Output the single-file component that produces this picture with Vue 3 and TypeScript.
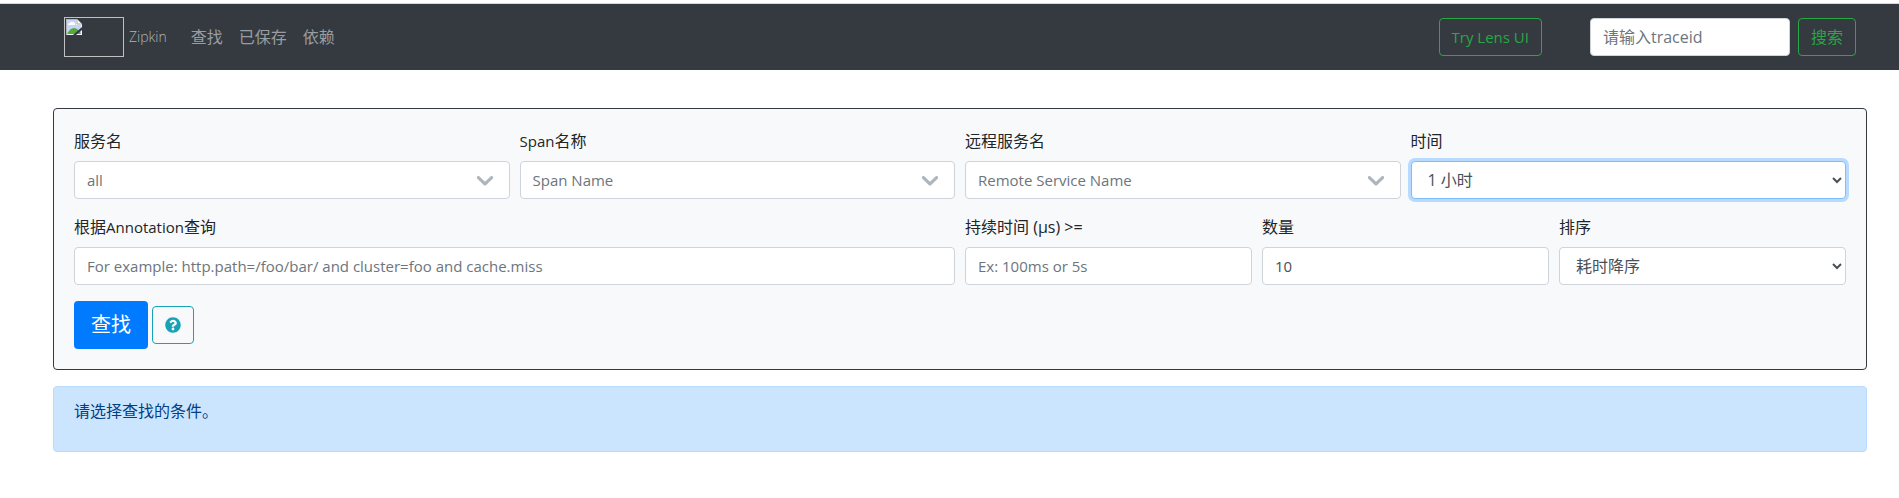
<script setup lang="ts">
import { ref } from 'vue'

interface PickerField {
  id: string
  latin: string
  label: string
  shown: string
}

const navLinks: string[] = ['查找', '已保存', '依赖']

const pickers: PickerField[] = [
  { id: 'service', latin: '', label: '服务名', shown: 'all' },
  { id: 'span', latin: 'Span', label: '名称', shown: 'Span Name' },
  { id: 'remote', latin: '', label: '远程服务名', shown: 'Remote Service Name' },
]

const traceId = ref('')
const annotation = ref('')
const duration = ref('')
const limit = ref('10')
</script>

<template>
  <div class="page">
    <nav class="navbar">
      <a class="brand" href="#">
        <svg class="logo" viewBox="0 0 60 40" aria-hidden="true">
          <rect x="0.5" y="0.5" width="59" height="39" fill="none" stroke="#c0c0c0" />
          <path d="M2 2H13L18 7V18H2Z" fill="#f4f6f8" />
          <path d="M3 3H12V8H17V17H3Z" fill="#c3d5f8" />
          <path d="M4 8Q4 6 6 6Q7 4 9 5Q11 5 11 8Z" fill="#fff" />
          <path d="M3 17Q6 11 10 11Q14 11 17 17Z" fill="#55ab3a" />
          <path d="M13 2L18 7H13Z" fill="#f8f9fa" stroke="#8b929b" stroke-width="0.7" />
          <path d="M18 10L9 18H12L18 13Z" fill="#343a40" />
          <path d="M2.5 18V2.5H13" fill="none" stroke="#9da3aa" stroke-width="0.8" />
        </svg>
        <span>Zipkin</span>
      </a>
      <div class="links">
        <a v-for="link in navLinks" :key="link" href="#">{{ link }}</a>
      </div>
      <button class="btn outline-green lens" type="button">Try Lens UI</button>
      <form class="trace-form" @submit.prevent>
        <input v-model="traceId" class="control" type="text" placeholder="请输入traceid" aria-label="请输入traceid" />
        <button class="btn outline-green" type="submit">搜索</button>
      </form>
    </nav>

    <main class="content">
      <form class="card" @submit.prevent>
        <div class="fields">
          <div v-for="p in pickers" :key="p.id" class="field quarter">
            <label :for="p.id"><span class="latin">{{ p.latin }}</span>{{ p.label }}</label>
            <div class="picker">
              <select :id="p.id" class="control latin">
                <option>{{ p.shown }}</option>
              </select>
              <svg class="chevron" viewBox="0 0 20 20" aria-hidden="true">
                <path d="M4.516 7.548c0.436-0.446 1.043-0.481 1.576 0l3.908 3.747 3.908-3.747c0.533-0.481 1.141-0.446 1.574 0 0.436 0.445 0.408 1.197 0 1.615-0.406 0.418-4.695 4.502-4.695 4.502-0.217 0.223-0.502 0.335-0.787 0.335s-0.57-0.112-0.789-0.335c0 0-4.287-4.084-4.695-4.502s-0.436-1.17 0-1.615z" />
              </svg>
            </div>
          </div>
          <div class="field quarter">
            <label for="lookback">时间</label>
            <select id="lookback" class="control active">
              <option>1 小时</option>
            </select>
          </div>
          <div class="field half">
            <label for="annotation">根据<span class="latin">Annotation</span>查询</label>
            <input id="annotation" v-model="annotation" class="control latin" type="text" placeholder="For example: http.path=/foo/bar/ and cluster=foo and cache.miss" />
          </div>
          <div class="field sixth">
            <label for="duration">持续时间 (μs) &gt;=</label>
            <input id="duration" v-model="duration" class="control latin" type="text" placeholder="Ex: 100ms or 5s" />
          </div>
          <div class="field sixth">
            <label for="limit">数量</label>
            <input id="limit" v-model="limit" class="control latin" type="text" />
          </div>
          <div class="field sixth">
            <label for="sort">排序</label>
            <select id="sort" class="control">
              <option>耗时降序</option>
            </select>
          </div>
        </div>
        <div class="actions">
          <button class="btn primary" type="submit">查找</button>
          <button class="btn help" type="button" aria-label="帮助">
            <svg viewBox="0 0 512 512" aria-hidden="true">
              <path d="M504 256c0 136.997-111.043 248-248 248S8 392.997 8 256C8 119.083 119.043 8 256 8s248 111.083 248 248zM262.655 90c-54.497 0-89.255 22.957-116.549 63.758-3.536 5.286-2.353 12.415 2.715 16.258l34.699 26.31c5.205 3.947 12.621 3.008 16.665-2.122 17.864-22.658 30.113-35.797 57.303-35.797 20.429 0 45.698 13.148 45.698 32.958 0 14.976-12.363 22.667-32.534 33.976C247.128 238.528 216 254.941 216 296v4c0 6.627 5.373 12 12 12h56c6.627 0 12-5.373 12-12v-1.333c0-28.462 83.186-29.647 83.186-106.667 0-58.002-60.165-102-116.531-102zM256 338c-25.365 0-46 20.635-46 46 0 25.364 20.635 46 46 46s46-20.636 46-46c0-25.365-20.635-46-46-46z" />
            </svg>
          </button>
        </div>
      </form>

      <div class="notice" role="status">
        <p>请选择查找的条件。</p>
      </div>
    </main>
  </div>
</template>

<style>
body {
  margin: 0;
  background: #fff;
}
</style>

<style scoped>
.page {
  padding-top: 3px;
  color: #212529;
  font: 16px/24px "Open Sans", "Noto Sans CJK SC", sans-serif;
}

.page *,
.page *::before {
  box-sizing: border-box;
}

.navbar {
  display: flex;
  align-items: center;
  height: 67px;
  padding: 0 43px 0 64px;
  border-top: 1px solid #d5d7d9;
  background: #343a40;
}

.navbar a {
  color: #9a9da0;
  text-decoration: none;
}

.navbar .brand {
  display: flex;
  align-items: center;
  gap: 5px;
  color: #b0b3b6;
  font-size: 14px;
  font-weight: 300;
}

.logo {
  width: 60px;
  height: 40px;
}

.links {
  display: flex;
  gap: 16px;
  margin-left: 24px;
}

.trace-form {
  display: flex;
  gap: 8px;
  margin-left: 48px;
}

.trace-form .control {
  width: 200px;
}

.btn {
  height: 38px;
  padding: 0 12px;
  border: 1px solid transparent;
  border-radius: 4px;
  background: transparent;
  font: inherit;
  cursor: pointer;
}

.outline-green {
  border-color: #28a745;
  color: #28a745;
}

.lens {
  margin-left: auto;
  font-size: 15px;
}

.control {
  display: block;
  width: 100%;
  height: 38px;
  padding: 6px 12px;
  border: 1px solid #ced4da;
  border-radius: 4px;
  background-color: #fff;
  color: #495057;
  font: inherit;
}

.control::placeholder {
  color: #6c757d;
  opacity: 1;
}

.control.active {
  border-color: #80bdff;
  box-shadow: 0 0 0 3px #b8daff;
}

.latin {
  font-size: 15px;
}

.content {
  padding: 38px 32px 32px 53px;
}

.card {
  padding: 20px;
  border: 1px solid #343a40;
  border-radius: 4px;
  background: #f8f9fa;
}

.fields {
  display: grid;
  grid-template-columns: repeat(12, minmax(0, 1fr));
  gap: 16px 10px;
}

.quarter {
  grid-column: span 3;
}

.half {
  grid-column: span 6;
}

.sixth {
  grid-column: span 2;
}

.field label {
  display: block;
  height: 24px;
  margin-bottom: 8px;
}

.picker {
  position: relative;
}

.picker .control {
  appearance: none;
  color: #6c757d;
}

.chevron {
  position: absolute;
  top: 5px;
  right: 11px;
  width: 28px;
  height: 28px;
  fill: #adb5bd;
  pointer-events: none;
}

.actions {
  display: flex;
  align-items: center;
  gap: 4px;
  margin-top: 16px;
}

.primary {
  height: 48px;
  padding: 0 16px;
  background: #007bff;
  color: #fff;
  font-size: 20px;
}

.help {
  border-color: #17a2b8;
}

.help svg {
  display: block;
  width: 16px;
  height: 16px;
  fill: #17a2b8;
}

.notice {
  margin-top: 16px;
  padding: 12px 20px;
  border: 1px solid #b8daff;
  border-radius: 4px;
  background: #cce5ff;
  color: #004085;
}

.notice p {
  margin: 0 0 16px;
}
</style>
